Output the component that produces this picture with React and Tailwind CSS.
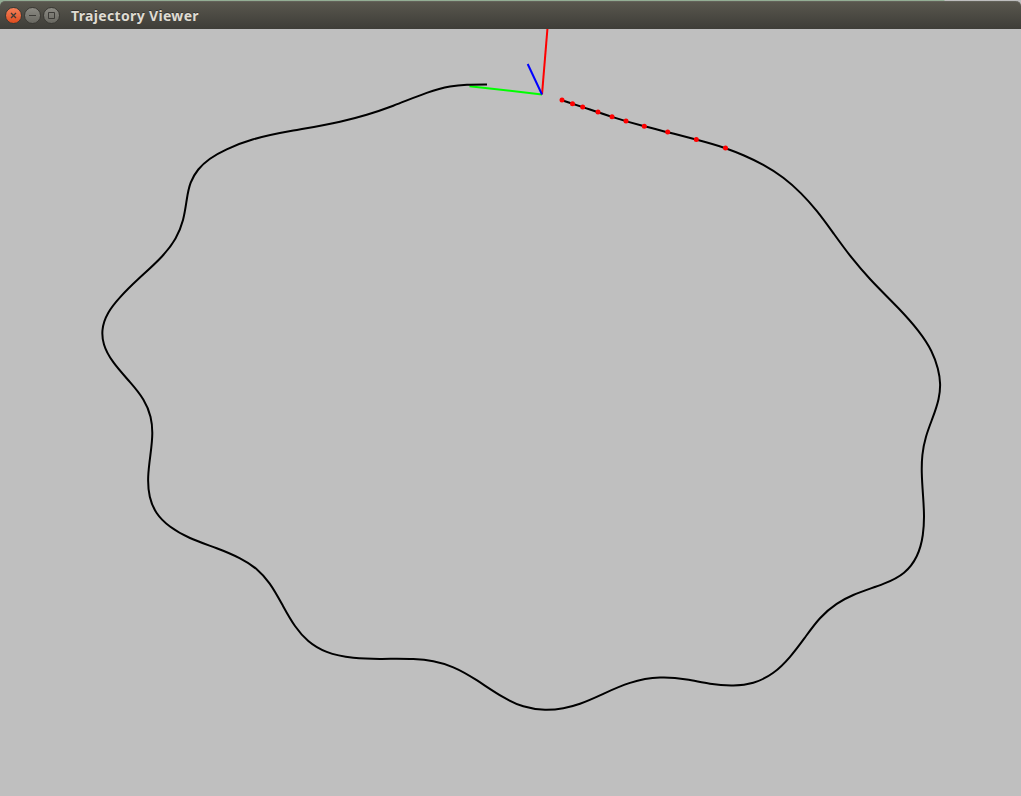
const trajectory = [
  [487, 84.4], [467, 84.7], [450, 86.5], [426.7, 92.9], [393.3, 105.7], [366.7, 114.7], [340, 121.7],
  [293.3, 130.5], [253.3, 139.3], [226.7, 149.3], [210, 158.7], [198.3, 169.5], [190.7, 182.7],
  [186.7, 200], [183, 220], [175.5, 238.5], [161.7, 256.7], [138.3, 279], [120, 297.3], [108.3, 312.7],
  [102.5, 330], [104, 344.5], [113.3, 362.2], [130, 382.1], [143.3, 399.5], [150.5, 416.7],
  [152.3, 433.3], [150.4, 455], [148.2, 476.7], [149.8, 496.7], [156.5, 512.7], [170, 526.5],
  [190, 538], [216.7, 548.3], [240, 558.4], [256.7, 569.2], [269.5, 583.4], [283, 606], [295, 626],
  [308.3, 641], [326.7, 651.9], [353.3, 657.7], [380, 658.9], [413.3, 659.1], [433.3, 661.2],
  [453.3, 667.3], [476.7, 680.2], [503.3, 697.2], [523.3, 706.3], [545, 709.7], [563.3, 708.2],
  [580, 703.7], [603.3, 693.8], [630, 682.9], [660, 677.6], [686.7, 679.5], [710, 683.7],
  [733.3, 685.4], [753.3, 682.7], [773.3, 672.8], [790, 656.8], [804.3, 638.4], [820, 618.2],
  [836.7, 603.8], [853.3, 595], [883.3, 583.9], [904, 572.7], [916.7, 556.2], [922.8, 535],
  [924, 516], [923, 495], [921.8, 473.3], [922.4, 455], [926, 436.7], [932.7, 417.7],
  [938.5, 399.3], [940.1, 384], [937.8, 368.5], [931.3, 351], [918.3, 330.9], [898, 307.8],
  [870, 279], [851.7, 257.7], [834, 234], [816.7, 210.9], [801, 193.4], [783.3, 177.8],
  [763.3, 164.9], [744, 155.5], [725.5, 148.2], [696, 139.5], [667.7, 132.2], [644.3, 126.3],
  [612, 116.9], [582.7, 107.1], [562, 100.2],
];

const waypoints = [
  [562, 100], [572.5, 103.7], [582.7, 107], [598, 112], [612, 116.7],
  [626, 121], [644.3, 126.3], [667.7, 132.1], [696.3, 139.4], [725.5, 148],
];

// Slopes of the natural cubic spline through `values`, with chord lengths `h`.
function splineSlopes(values, h) {
  const n = values.length;
  const upper = [0.5];
  const rhs = [(1.5 * (values[1] - values[0])) / h[0]];
  for (let i = 1; i < n; i++) {
    const last = i === n - 1;
    const lo = last ? 1 : h[i];
    const di = last ? 2 : 2 * (h[i - 1] + h[i]);
    const up = last ? 0 : h[i - 1];
    const left = (values[i] - values[i - 1]) / h[i - 1];
    const r = last ? 3 * left : 3 * (h[i] * left + (h[i - 1] * (values[i + 1] - values[i])) / h[i]);
    const m = di - lo * upper[i - 1];
    upper.push(up / m);
    rhs.push((r - lo * rhs[i - 1]) / m);
  }
  for (let i = n - 2; i >= 0; i--) rhs[i] -= upper[i] * rhs[i + 1];
  return rhs;
}

function smoothPath(points) {
  const h = points.slice(1).map((p, i) => Math.hypot(p[0] - points[i][0], p[1] - points[i][1]));
  const sx = splineSlopes(points.map((p) => p[0]), h);
  const sy = splineSlopes(points.map((p) => p[1]), h);
  let d = `M${points[0][0]} ${points[0][1]}`;
  for (let i = 0; i < h.length; i++) {
    const [x0, y0] = points[i];
    const [x1, y1] = points[i + 1];
    const t = h[i] / 3;
    d += `C${x0 + sx[i] * t} ${y0 + sy[i] * t} ${x1 - sx[i + 1] * t} ${y1 - sy[i + 1] * t} ${x1} ${y1}`;
  }
  return d;
}

function WindowButton({ label, className, children }) {
  return (
    <button
      aria-label={label}
      className={`flex h-[17px] w-[17px] items-center justify-center rounded-full border border-[#3a3934] bg-linear-to-b ${className}`}
    >
      <svg className="shrink-0" width="9" height="9" viewBox="0 0 9 9" fill="none" stroke="#3c3b37" strokeWidth="1">
        {children}
      </svg>
    </button>
  );
}

function TitleBar() {
  return (
    <div className="h-[29px] shrink-0 bg-linear-to-r from-[#93ad94] from-[944px] to-[#bdbdbd] to-[945px] pt-px">
      <header className="flex h-7 items-center rounded-t-[5px] border-t border-[#63625a] bg-linear-to-b from-[#59574e] to-[#3e3d38] pl-[5px]">
        <div className="flex gap-[2px]">
          <WindowButton label="Close" className="from-[#f58058] to-[#df4b1b]">
            <path d="M2 2 7 7M7 2 2 7" strokeWidth="1.3" />
          </WindowButton>
          <WindowButton label="Minimize" className="from-[#8b8a83] to-[#696861]">
            <path d="M1 4.5H8" />
          </WindowButton>
          <WindowButton label="Maximize" className="from-[#8b8a83] to-[#696861]">
            <path d="M1.5 1.5H7.5V7.5H1.5Z" />
          </WindowButton>
        </div>
        <h1 className="ml-[11px] font-['Noto_Sans','Open_Sans',sans-serif] text-[14px] leading-none font-bold tracking-[0.34px] whitespace-nowrap text-[#dfdbd2] [text-shadow:0_-1px_0_#33322e]">
          Trajectory Viewer
        </h1>
      </header>
    </div>
  );
}

export default function App() {
  return (
    <div className="flex h-[796px] w-[1021px] flex-col overflow-hidden bg-[#bfbfbf]">
      <TitleBar />
      <main className="h-[767px]">
        <svg className="block" width="1021" height="767" viewBox="0 29 1021 767" fill="none" strokeWidth="2">
          <path d="M542 94.5 547.5 28" stroke="#ff0000" />
          <path d="M542 94.5 469.5 86.2" stroke="#00ff00" />
          <path d="M542 94.5 527.7 64" stroke="#0000ff" />
          <path d={smoothPath(trajectory)} stroke="#000000" />
          {waypoints.map(([x, y]) => (
            <circle key={x} cx={x} cy={y} r="2.5" fill="#ff0000" />
          ))}
        </svg>
      </main>
    </div>
  );
}
